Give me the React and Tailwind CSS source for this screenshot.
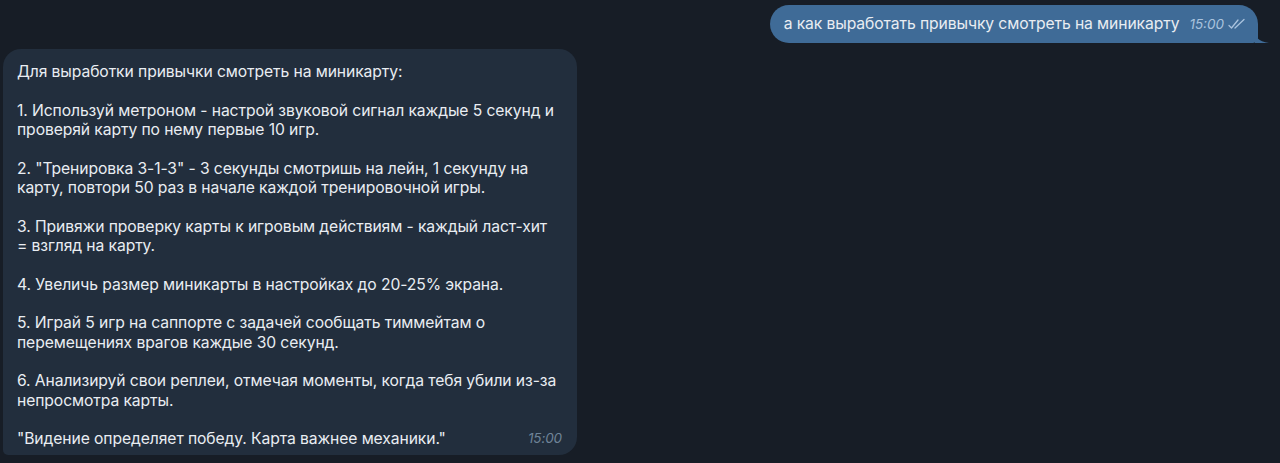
const font = { fontFamily: "Inter, 'Noto Sans', sans-serif" };

function Checks() {
  return (
    <svg width="18" height="12" viewBox="0 0 18 12" fill="none" className="ml-[4px] inline-block">
      <path d="M1 7.5 L3.5 10 L10 2" stroke="#a9c3de" strokeWidth="1.3" strokeLinecap="round" strokeLinejoin="round" />
      <path d="M7 10 L16 1.5" stroke="#a9c3de" strokeWidth="1.3" strokeLinecap="round" />
    </svg>
  );
}

const paragraphs = [
  ["Для выработки привычки смотреть на миникарту:"],
  [
    "1. Используй метроном - настрой звуковой сигнал каждые 5 секунд и",
    "проверяй карту по нему первые 10 игр.",
  ],
  [
    "2. \"Тренировка 3-1-3\" - 3 секунды смотришь на лейн, 1 секунду на",
    "карту, повтори 50 раз в начале каждой тренировочной игры.",
  ],
  [
    "3. Привяжи проверку карты к игровым действиям - каждый ласт-хит",
    "= взгляд на карту.",
  ],
  ["4. Увеличь размер миникарты в настройках до 20-25% экрана."],
  [
    "5. Играй 5 игр на саппорте с задачей сообщать тиммейтам о",
    "перемещениях врагов каждые 30 секунд.",
  ],
  [
    "6. Анализируй свои реплеи, отмечая моменты, когда тебя убили из-за",
    "непросмотра карты.",
  ],
];

export default function App() {
  return (
    <div className="h-screen w-full bg-[#171d26] overflow-hidden text-[#e9edf2]" style={font}>
      <div className="flex justify-end pt-[5px] pr-[22px]">
        <div className="relative flex items-center h-[38px] rounded-[19px] rounded-br-[5px] bg-[#3f6b97] pl-[14px] pr-[12px]">
          <span className="text-[15.7px] leading-[20px] tracking-[-0.1px]">
            а как выработать привычку смотреть на миникарту
          </span>
          <span className="ml-[10px] text-[13.5px] italic text-[#aac3de] leading-[20px]">15:00</span>
          <Checks />
          <svg width="14" height="12" viewBox="0 0 14 12" className="absolute -right-[11px] bottom-0">
            <path d="M0 0 C0 6 3 10 14 12 L0 12 Z" fill="#3f6b97" />
          </svg>
        </div>
      </div>
      <div className="mt-[6px] ml-[3px]">
        <div className="w-[574px] rounded-[18px] rounded-bl-[5px] bg-[#222e3d] pl-[14px] pr-[15px] pt-[13px] pb-[6px] text-[15.7px] leading-[19.4px] tracking-[-0.1px]">
          {paragraphs.map((p, i) => (
            <p key={i} className="mb-[19.2px] whitespace-nowrap">
              {p.map((line, j) => (
                <span key={j} className="block">{line}</span>
              ))}
            </p>
          ))}
          <div className="flex items-end justify-between whitespace-nowrap">
            <span>"Видение определяет победу. Карта важнее механики."</span>
            <span className="text-[13.5px] italic text-[#6f8398] leading-[19.4px]">15:00</span>
          </div>
        </div>
      </div>
    </div>
  );
}
